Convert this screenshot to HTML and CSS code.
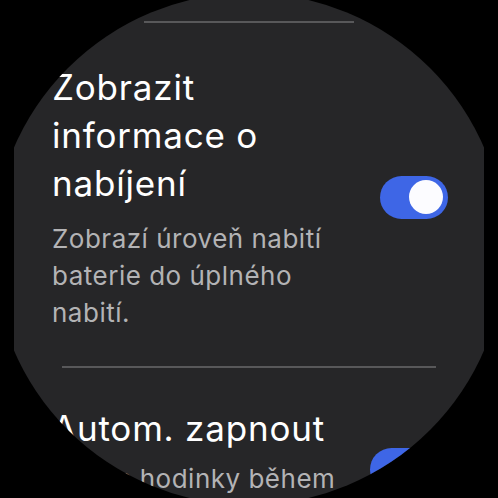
FILE: index.html
```html
<!DOCTYPE html>
<html lang="cs">
<head>
<meta charset="utf-8">
<link rel="stylesheet" href="styles.css">
</head>
<body>
<div class="screen">
  <div class="divider divider-top"></div>
  <div class="item item-first">
    <div class="text">
      <div class="title">Zobrazit informace o nabíjení</div>
      <div class="desc">Zobrazí úroveň nabití baterie do úplného nabití.</div>
    </div>
    <div class="toggle"><div class="knob"></div></div>
  </div>
  <div class="divider divider-mid"></div>
  <div class="item item-second">
    <div class="text">
      <div class="title">Autom. zapnout</div>
      <div class="desc desc-tight">Zapne hodinky během nabíjení.</div>
    </div>
    <div class="toggle toggle-inset"><div class="knob"></div></div>
  </div>
</div>
</body>
</html>
```
FILE: styles.css
```css
html, body {
  margin: 0;
  padding: 0;
  background: #000;
  width: 498px;
  height: 498px;
  overflow: hidden;
}
.screen {
  margin-left: 14px;
  width: 470px;
  height: 498px;
  overflow: hidden;
  background: #262628;
  clip-path: circle(256px at 235px 249px);
  font-family: Inter, "Noto Sans", sans-serif;
  color: #fff;
}
.divider {
  height: 2px;
  background: #58585a;
  margin-left: auto;
  margin-right: auto;
}
.divider-top {
  width: 210px;
  margin-top: 21px;
  margin-bottom: 40px;
}
.divider-mid {
  width: 374px;
  margin-top: 35px;
  margin-bottom: 36px;
}
.item {
  display: flex;
  align-items: center;
  padding-left: 38px;
}
.text {
  width: 300px;
}
.title {
  font-size: 35px;
  line-height: 48px;
  font-weight: 400;
  letter-spacing: 0.8px;
  color: #fff;
}
.desc {
  font-size: 26px;
  line-height: 37px;
  letter-spacing: 0.5px;
  color: #b3b3b5;
  margin-top: 13px;
  width: 300px;
}
.desc-tight {
  margin-top: 8px;
}
.toggle {
  margin-left: auto;
  margin-right: 36px;
  width: 68px;
  height: 43px;
  border-radius: 22px;
  background: #3e66e6;
  display: flex;
  align-items: center;
  justify-content: flex-end;
  padding-right: 5px;
  box-sizing: border-box;
  flex-shrink: 0;
}
.toggle-inset {
  margin-right: 46px;
}
.knob {
  width: 34px;
  height: 34px;
  border-radius: 50%;
  background: #fcfcff;
}
```
